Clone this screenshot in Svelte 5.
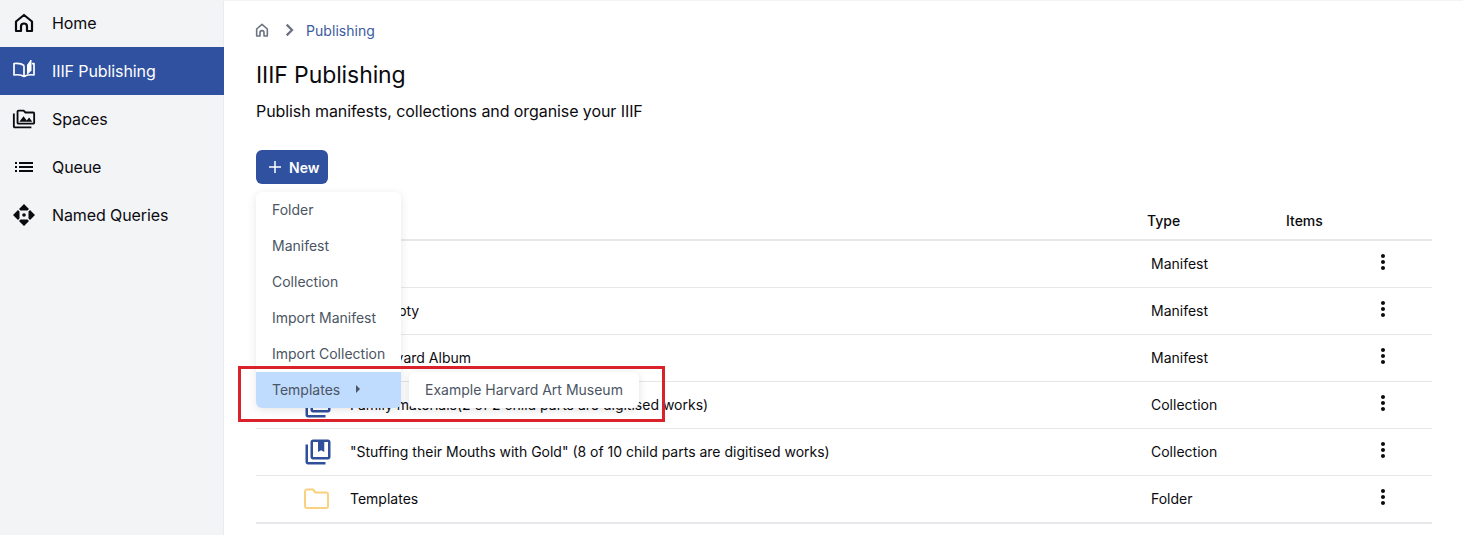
<script>
  const nav = [
    { label: "Home", icon: "home" },
    { label: "IIIF Publishing", icon: "book", active: true },
    { label: "Spaces", icon: "media" },
    { label: "Queue", icon: "list" },
    { label: "Named Queries", icon: "query" }
  ];

  const rows = [
    { label: "", type: "Manifest", icon: "manifest" },
    { label: "Not empty", type: "Manifest", icon: "manifest" },
    { label: "An Harvard Album", type: "Manifest", icon: "manifest" },
    { label: "Family materials(2 of 2 child parts are digitised works)", type: "Collection", icon: "collection" },
    { label: '"Stuffing their Mouths with Gold" (8 of 10 child parts are digitised works)', type: "Collection", icon: "collection" },
    { label: "Templates", type: "Folder", icon: "folder" }
  ];

  const menu = ["Folder", "Manifest", "Collection", "Import Manifest", "Import Collection"];
</script>

<div class="page">
  <aside class="sidebar">
    {#each nav as item}
      <a class="nav-item" class:active={item.active} href="#top">
        <span class="nav-icon">
          {#if item.icon === "home"}
            <svg width="24" height="24" viewBox="0 0 24 24" fill="none" stroke="currentColor" stroke-width="2.200" stroke-linejoin="round"><path d="M4 20v-9.500L12 4l8 6.500V20h-5v-4.500a3 3 0 0 0-6 0V20z" /></svg>
          {:else if item.icon === "book"}
            <svg class="book" width="24" height="24" viewBox="0 0 24 24" fill="none" stroke="currentColor" stroke-width="1.700" stroke-linejoin="round"><path d="M12 8.500C10 6.800 6 6 2 6.500V18c4-.5 8 0 10 1.500 2-1.500 6-2 10-1.500V6.500c-.8 0-1.500 0-2 .1" /><path d="M12 8.500v11" /><path d="M15.500 8 19 3v10.500L15.500 17z" fill="currentColor" stroke-width="1" /></svg>
          {:else if item.icon === "media"}
            <svg width="24" height="24" viewBox="-1 -1 26 26" fill="currentColor"><path d="M2 6H0v5h.01L0 20c0 1.100.9 2 2 2h18v-2H2V6zm5 9h14l-3.500-4.500-2.500 3.010L11.500 9zM22 4h-8l-2-2H6c-1.100 0-1.990.9-1.990 2L4 16c0 1.100.9 2 2 2h16c1.100 0 2-.9 2-2V6c0-1.100-.9-2-2-2zm0 12H6V4h5.170l1.410 1.410.59.59H22v10z" /></svg>
          {:else if item.icon === "list"}
            <svg width="24" height="24" viewBox="0 0 24 24" fill="currentColor"><path d="M3 13h2v-2H3v2zm0 4h2v-2H3v2zm0-8h2V7H3v2zm4 4h14v-2H7v2zm0 4h14v-2H7v2zM7 7v2h14V7H7z" /></svg>
          {:else}
            <svg width="24" height="24" viewBox="0 0 24 24" fill="currentColor"><path d="M12 1l5 5-1.500 1.500h-7L7 6zM1 12l5-5 1.500 1.500v7L6 17zM23 12l-5-5-1.500 1.500v7L18 17zM12 23l5-5-1.500-1.500h-7L7 18z" /><circle cx="12" cy="12" r="1.800" /></svg>
          {/if}
        </span>
        <span>{item.label}</span>
      </a>
    {/each}
  </aside>

  <main class="content">
    <nav class="crumbs">
      <svg class="crumb-home" width="16" height="16" viewBox="0 0 24 24" fill="none" stroke="currentColor" stroke-width="2.400" stroke-linejoin="round"><path d="M4 21V10.500L12 3.500l8 7V21h-5v-5a3 3 0 0 0-6 0v5z" /></svg>
      <svg class="crumb-sep" width="16" height="16" viewBox="0 0 24 24" fill="none" stroke="currentColor" stroke-width="3.400"><path d="M8.500 4l8 8-8 8" /></svg>
      <span class="crumb-link">Publishing</span>
    </nav>

    <h1>IIIF Publishing</h1>
    <p class="lead">Publish manifests, collections and organise your IIIF</p>

    <div class="actions">
      <button class="new-btn">
        <svg width="16" height="16" viewBox="0 0 16 16" fill="none" stroke="currentColor" stroke-width="1.500"><path d="M8 2v12M2 8h12" /></svg>
        New
      </button>

      <div class="menu">
        {#each menu as entry}
          <div class="menu-item">{entry}</div>
        {/each}
        <div class="menu-item hovered">
          Templates
          <svg width="6" height="10" viewBox="0 0 6 10" fill="currentColor"><path d="M1 1l4 4-4 4z" /></svg>
        </div>
        <div class="submenu">Example Harvard Art Museum</div>
      </div>
      <div class="callout"></div>
    </div>

    <section class="table">
      <div class="row head">
        <div></div>
        <div class="head-type">Type</div>
        <div>Items</div>
        <div></div>
      </div>
      {#each rows as row}
        <div class="row">
          <div class="name">
            <span class="row-icon">
              {#if row.icon === "folder"}
                <svg class="folder" width="28" height="28" viewBox="0 0 28 28" fill="none" stroke="#fad27f" stroke-width="2" stroke-linejoin="round"><path d="M3 7.500a2 2 0 0 1 2-2h6l2.500 3H24a2 2 0 0 1 2 2V22a2 2 0 0 1-2 2H5a2 2 0 0 1-2-2z" /></svg>
              {:else}
                <svg width="30" height="30" viewBox="0 0 24 24" fill="#2f4f9b"><path d="M4 6H2v14c0 1.100.9 2 2 2h14v-2H4V6z" /><path d="M20 2H8c-1.100 0-2 .9-2 2v12c0 1.100.9 2 2 2h12c1.100 0 2-.9 2-2V4c0-1.100-.9-2-2-2zm0 14H8V4h4v8l2.500-1.500L17 12V4h3v12z" /></svg>
              {/if}
            </span>
            <span>{row.label}</span>
          </div>
          <div class="type">{row.type}</div>
          <div></div>
          <div class="more">
            <svg width="24" height="24" viewBox="0 0 24 24" fill="currentColor"><path d="M12 8c1.100 0 2-.9 2-2s-.9-2-2-2-2 .9-2 2 .9 2 2 2zm0 2c-1.100 0-2 .9-2 2s.9 2 2 2 2-.9 2-2-.9-2-2-2zm0 6c-1.100 0-2 .9-2 2s.9 2 2 2 2-.9 2-2-.9-2-2-2z" /></svg>
          </div>
        </div>
      {/each}
    </section>
  </main>
</div>

<style>
  :global(body) {
    margin: 0;
    background: #fff;
  }

  .page {
    display: flex;
    height: 535px;
    overflow: hidden;
    font-family: Inter, "Noto Sans", sans-serif;
    color: #0b0b0f;
    border-top: 1px solid #f3f4f6;
    box-sizing: border-box;
  }

  .sidebar {
    width: 224px;
    flex: none;
    box-sizing: border-box;
    background: #f3f4f6;
    border-right: 1px solid #e9ebee;
  }

  .nav-item {
    display: flex;
    align-items: center;
    box-sizing: border-box;
    height: 48px;
    padding-left: 12px;
    font-size: 16px;
    letter-spacing: -0.1px;
    color: inherit;
    text-decoration: none;
  }

  .nav-item:first-child {
    height: 46px;
    padding-bottom: 2px;
  }

  .nav-item.active {
    background: #2f519f;
    color: #fff;
    margin-right: -1px;
  }

  .nav-icon {
    display: flex;
    width: 24px;
    height: 24px;
    margin-right: 16px;
  }

  .book {
    margin-top: -2px;
  }

  .content {
    flex: 1;
    padding: 0 31px 0 32px;
    min-width: 0;
  }

  .crumbs {
    display: flex;
    align-items: center;
    height: 20px;
    margin-top: 19px;
    font-size: 14px;
  }

  .crumb-home {
    color: #6b7280;
    margin-left: -2px;
    margin-right: 11px;
  }

  .crumb-sep {
    color: #6b7280;
    margin-right: 9px;
  }

  .crumb-link {
    color: #3a5a9f;
    letter-spacing: 0.05px;
  }

  h1 {
    margin: 19px 0 0;
    font-size: 23px;
    line-height: 32px;
    letter-spacing: -0.1px;
    font-weight: 400;
  }

  .lead {
    margin: 8px 0 0;
    font-size: 16px;
    line-height: 24px;
    letter-spacing: -0.08px;
  }

  .actions {
    position: relative;
    margin-top: 27px;
    height: 34px;
  }

  .new-btn {
    display: flex;
    align-items: center;
    gap: 6px;
    width: 72px;
    height: 34px;
    padding: 0 0 0 11px;
    border: 0;
    border-radius: 6px;
    background: #2f519f;
    color: #fff;
    font: 600 14px Inter, sans-serif;
  }

  .menu {
    position: absolute;
    z-index: 3;
    left: 0;
    top: 42px;
    width: 145px;
    background: #fff;
    border-radius: 6px;
    box-shadow: 0 2px 10px rgba(0, 0, 0, 0.1);
    font-size: 14px;
    color: #4b5563;
  }

  .menu-item {
    display: flex;
    align-items: center;
    box-sizing: border-box;
    height: 36px;
    padding: 0 0 2px 16px;
    white-space: nowrap;
  }

  .menu-item.hovered {
    background: #bfdbfe;
    border-radius: 0 0 6px 6px;
    gap: 15px;
  }

  .submenu {
    position: absolute;
    left: 153px;
    bottom: 0;
    width: 230px;
    height: 36px;
    box-sizing: border-box;
    display: flex;
    align-items: center;
    padding: 0 0 2px 16px;
    background: #fff;
    border-radius: 6px;
    box-shadow: 0 2px 10px rgba(0, 0, 0, 0.12);
    white-space: nowrap;
  }

  .callout {
    position: absolute;
    z-index: 4;
    left: -18px;
    top: 216px;
    width: 427px;
    height: 56px;
    box-sizing: border-box;
    border: 3px solid #d9222a;
  }

  .table {
    margin-top: 18px;
    font-size: 14px;
    border-bottom: 2px solid #e5e7eb;
  }

  .row {
    display: grid;
    grid-template-columns: 891px 139px 79px 1fr;
    align-items: center;
    box-sizing: border-box;
    height: 47px;
    padding-bottom: 1px;
    border-bottom: 1px solid #e5e7eb;
  }

  .row:last-child {
    height: 46px;
    padding-bottom: 2px;
    border-bottom: 0;
  }

  .row.head {
    height: 39px;
    padding-bottom: 1px;
    border-bottom: 2px solid #e5e7eb;
    font-weight: 500;
  }

  .name {
    display: flex;
    align-items: center;
    padding-left: 47px;
  }

  .row-icon {
    display: flex;
    justify-content: center;
    width: 30px;
    margin-right: 17px;
  }

  .folder {
    margin: -1px 0 0 -4px;
  }

  .type {
    padding-left: 4px;
  }

  .more {
    display: flex;
    margin: -3px 0 0 6px;
  }
</style>
